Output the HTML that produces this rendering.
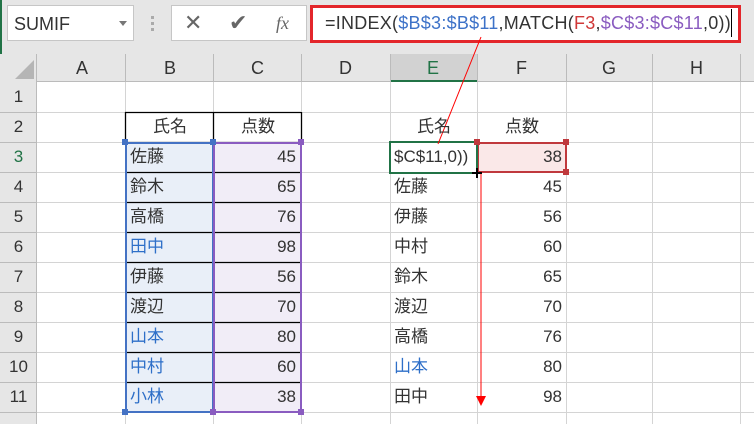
<!DOCTYPE html>
<html><head><meta charset="utf-8"><style>
*{margin:0;padding:0;box-sizing:border-box}
body{width:754px;height:424px;overflow:hidden;background:#fff;position:relative;font-family:"Liberation Sans","Noto Sans CJK JP",sans-serif;}
.a{position:absolute}
.t{position:absolute;font-size:17px;line-height:30px;color:#333;white-space:nowrap}
</style></head><body>
<div class="a" style="left:0;top:0;width:754px;height:54px;background:#e6e6e6"></div>
<div class="a" style="left:0;top:0;width:2px;height:424px;background:#217346"></div>
<div class="a" style="left:7px;top:5px;width:127px;height:36px;background:#fff;border:1px solid #c6c6c6"></div>
<div class="t" style="left:14px;top:9px;font-size:18px;color:#333">SUMIF</div>
<div class="a" style="left:119px;top:21px;border:4px solid transparent;border-top:5px solid #777"></div>
<div class="a" style="left:151px;top:16px;width:3px;height:3px;background:#aaa;box-shadow:0 6px #aaa,0 12px #aaa"></div>
<div class="a" style="left:171px;top:5px;width:136px;height:36px;background:#fff;border:1px solid #c6c6c6"></div>
<div class="t" style="left:184px;top:8px;font-size:22px;color:#666">✕</div>
<div class="t" style="left:229px;top:8px;font-size:22px;color:#666">✔</div>
<div class="t" style="left:276px;top:8px;font-size:18px;color:#666;font-family:'Liberation Serif',serif;font-style:italic">fx</div>
<div class="a" style="left:310px;top:5px;width:431px;height:38px;background:#fff;border:3px solid #e3262b"></div>
<div class="t" style="left:325px;top:8px;font-size:18px;color:#333;letter-spacing:0.25px">=INDEX(<span style="color:#3d72c8">$B$3:$B$11</span>,MATCH(<span style="color:#d03838">F3</span>,<span style="color:#8a5cc0">$C$3:$C$11</span>,0))</div>
<div class="a" style="left:731px;top:9px;width:1px;height:28px;background:#000"></div>
<div class="a" style="left:0;top:54px;width:754px;height:28px;background:#e6e6e6;border-bottom:1px solid #bbb"></div>
<div class="a" style="left:0;top:54px;width:37px;height:370px;background:#e6e6e6;border-right:1px solid #bbb"></div>
<div class="a" style="left:15px;top:60px;width:0;height:0;border-left:19px solid transparent;border-bottom:19px solid #b5b5b5"></div>
<div class="a" style="left:390px;top:54px;width:87px;height:28px;background:#d2d2d2;border-bottom:2px solid #217346"></div>
<svg class="a" style="left:0;top:0" width="754" height="424">
<g stroke="#d4d4d4" stroke-width="1">
<line x1="37" y1="112.5" x2="754" y2="112.5"/>
<line x1="37" y1="142.5" x2="754" y2="142.5"/>
<line x1="37" y1="172.5" x2="754" y2="172.5"/>
<line x1="37" y1="202.5" x2="754" y2="202.5"/>
<line x1="37" y1="232.5" x2="754" y2="232.5"/>
<line x1="37" y1="262.5" x2="754" y2="262.5"/>
<line x1="37" y1="292.5" x2="754" y2="292.5"/>
<line x1="37" y1="322.5" x2="754" y2="322.5"/>
<line x1="37" y1="352.5" x2="754" y2="352.5"/>
<line x1="37" y1="382.5" x2="754" y2="382.5"/>
<line x1="37" y1="412.5" x2="754" y2="412.5"/>
<line x1="125.5" y1="82" x2="125.5" y2="424"/><line x1="213.5" y1="82" x2="213.5" y2="424"/>
<line x1="301.5" y1="82" x2="301.5" y2="424"/><line x1="390.5" y1="82" x2="390.5" y2="424"/>
<line x1="477.5" y1="82" x2="477.5" y2="424"/><line x1="566.5" y1="82" x2="566.5" y2="424"/>
<line x1="652.5" y1="82" x2="652.5" y2="424"/><line x1="740.5" y1="82" x2="740.5" y2="424"/>
</g>
<g stroke="#bbb"><line x1="125.5" y1="54" x2="125.5" y2="82"/><line x1="213.5" y1="54" x2="213.5" y2="82"/><line x1="301.5" y1="54" x2="301.5" y2="82"/><line x1="390.5" y1="54" x2="390.5" y2="82"/><line x1="477.5" y1="54" x2="477.5" y2="82"/><line x1="566.5" y1="54" x2="566.5" y2="82"/><line x1="652.5" y1="54" x2="652.5" y2="82"/><line x1="740.5" y1="54" x2="740.5" y2="82"/>
<line x1="0" y1="112.5" x2="37" y2="112.5"/><line x1="0" y1="142.5" x2="37" y2="142.5"/><line x1="0" y1="172.5" x2="37" y2="172.5"/><line x1="0" y1="202.5" x2="37" y2="202.5"/><line x1="0" y1="232.5" x2="37" y2="232.5"/><line x1="0" y1="262.5" x2="37" y2="262.5"/><line x1="0" y1="292.5" x2="37" y2="292.5"/><line x1="0" y1="322.5" x2="37" y2="322.5"/><line x1="0" y1="352.5" x2="37" y2="352.5"/><line x1="0" y1="382.5" x2="37" y2="382.5"/><line x1="0" y1="412.5" x2="37" y2="412.5"/></g>
<rect x="126" y="143" width="87" height="270" fill="#e9eff8"/>
<rect x="214" y="143" width="87" height="270" fill="#f1edf7"/>
<rect x="478" y="143" width="88" height="29" fill="#fae8e8"/>
<g stroke="#000" stroke-width="1.3"><line x1="125" y1="112.5" x2="301" y2="112.5"/><line x1="125.5" y1="112" x2="125.5" y2="142"/><line x1="213.5" y1="112" x2="213.5" y2="142"/><line x1="301.5" y1="112" x2="301.5" y2="142"/>
<line x1="125" y1="142.5" x2="301" y2="142.5"/><line x1="125" y1="172.5" x2="301" y2="172.5"/><line x1="125" y1="202.5" x2="301" y2="202.5"/><line x1="125" y1="232.5" x2="301" y2="232.5"/><line x1="125" y1="262.5" x2="301" y2="262.5"/><line x1="125" y1="292.5" x2="301" y2="292.5"/><line x1="125" y1="322.5" x2="301" y2="322.5"/><line x1="125" y1="352.5" x2="301" y2="352.5"/><line x1="125" y1="382.5" x2="301" y2="382.5"/></g>
<rect x="126" y="143" width="87" height="269" fill="none" stroke="#4472c4" stroke-width="2"/>
<rect x="214" y="143" width="87" height="269" fill="none" stroke="#8a5cc0" stroke-width="2"/>
<rect x="478" y="143" width="88" height="29" fill="none" stroke="#c0393d" stroke-width="2"/>
<rect x="390" y="142" width="87" height="31" fill="none" stroke="#217346" stroke-width="2"/>
<g fill="#4472c4"><rect x="122" y="139" width="6" height="6"/><rect x="210" y="139" width="6" height="6"/><rect x="122" y="409" width="6" height="6"/></g>
<g fill="#8a5cc0"><rect x="210" y="409" width="6" height="6"/><rect x="298" y="139" width="6" height="6"/><rect x="298" y="409" width="6" height="6"/></g>
<g fill="#c0393d"><rect x="474" y="139" width="6" height="6"/><rect x="563" y="139" width="6" height="6"/><rect x="563" y="169" width="6" height="6"/></g>
<line x1="481" y1="37" x2="438" y2="144" stroke="#f00" stroke-width="1"/>
<line x1="481" y1="172" x2="481" y2="398" stroke="#f00" stroke-width="1"/>
<polygon points="476,396 486,396 481,406" fill="#f00"/>
<path d="M477 168v10M472 173h10" stroke="#000" stroke-width="2"/>
</svg>
<div class="t" style="left:76px;top:54px;font-size:18px;line-height:28px">A</div>
<div class="t" style="left:164px;top:54px;font-size:18px;line-height:28px">B</div>
<div class="t" style="left:251px;top:54px;font-size:18px;line-height:28px">C</div>
<div class="t" style="left:339px;top:54px;font-size:18px;line-height:28px">D</div>
<div class="t" style="left:427px;top:54px;font-size:18px;line-height:28px;color:#217346">E</div>
<div class="t" style="left:516px;top:54px;font-size:18px;line-height:28px">F</div>
<div class="t" style="left:602px;top:54px;font-size:18px;line-height:28px">G</div>
<div class="t" style="left:690px;top:54px;font-size:18px;line-height:28px">H</div>
<div class="t" style="left:0;top:82px;width:37px;text-align:center;line-height:30px">1<br>2<br><span style="color:#217346">3</span><br>4<br>5<br>6<br>7<br>8<br>9<br>10<br>11</div>
<div class="t" style="left:153px;top:112px">氏名</div>
<div class="t" style="left:241px;top:112px">点数</div>
<div class="t" style="left:130px;top:142px;line-height:30px">佐藤<br>鈴木<br>高橋<br><span style="color:#2e6fc8">田中</span><br>伊藤<br>渡辺<br><span style="color:#2e6fc8">山本</span><br><span style="color:#2e6fc8">中村</span><br><span style="color:#2e6fc8">小林</span></div>
<div class="t" style="left:214px;width:82px;text-align:right;top:142px;line-height:30px">45<br>65<br>76<br>98<br>56<br>70<br>80<br>60<br>38</div>
<div class="t" style="left:417px;top:112px">氏名</div>
<div class="t" style="left:505px;top:112px">点数</div>
<div class="t" style="left:394px;top:142px">$C$11,0))</div>
<div class="t" style="left:394px;top:172px;line-height:30px">佐藤<br>伊藤<br>中村<br>鈴木<br>渡辺<br>高橋<br><span style="color:#2e6fc8">山本</span><br>田中</div>
<div class="t" style="left:478px;width:84px;text-align:right;top:142px;line-height:30px">38<br>45<br>56<br>60<br>65<br>70<br>76<br>80<br>98</div>
</body></html>
